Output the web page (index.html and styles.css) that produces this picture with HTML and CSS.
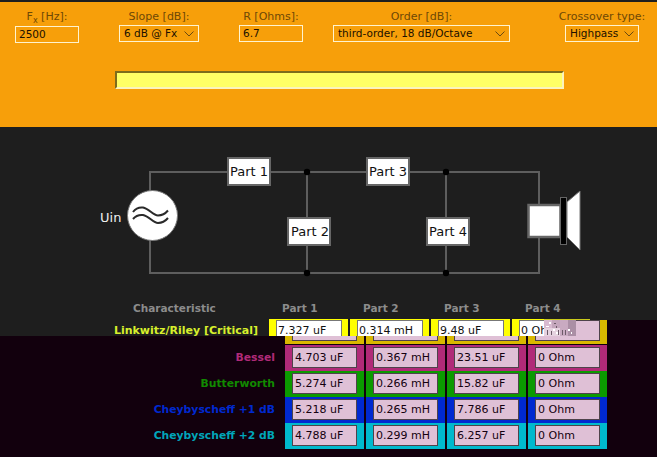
FILE: index.html
```html
<!DOCTYPE html>
<html lang="en">
<head>
<meta charset="UTF-8">
<meta name="viewport" content="width=device-width, initial-scale=1.0">
<title>Crossover calculator</title>
<link rel="stylesheet" href="styles.css">
</head>
<body>

<div class="controls">
    <div class="field-row">
        <div class="field field-fx">
            <label>F<sub>x</sub> [Hz]:</label>
            <div class="box box-low">2500</div>
        </div>
        <div class="field field-slope">
            <label>Slope [dB]:</label>
            <div class="box picker"><span>6 dB @ Fx</span><svg class="chevron" width="10" height="6" viewBox="0 0 10 6"><path d="M0.5 0.5 L5 5 L9.5 0.5"/></svg></div>
        </div>
        <div class="field field-r">
            <label>R [Ohms]:</label>
            <div class="box">6.7</div>
        </div>
        <div class="field field-order">
            <label>Order [dB]:</label>
            <div class="box picker"><span>third-order, 18 dB/Octave</span><svg class="chevron" width="10" height="6" viewBox="0 0 10 6"><path d="M0.5 0.5 L5 5 L9.5 0.5"/></svg></div>
        </div>
        <div class="field field-type">
            <label>Crossover type:</label>
            <div class="box picker"><span>Highpass</span><svg class="chevron" width="10" height="6" viewBox="0 0 10 6"><path d="M0.5 0.5 L5 5 L9.5 0.5"/></svg></div>
        </div>
    </div>
    <div class="message-bar"></div>
</div>

<div class="schematic">
    <svg class="circuit" width="657" height="173" viewBox="0 127 657 173">
        <g class="wire">
            <path d="M150 191 V172 H539 V204"/>
            <path d="M150 240 V273 H539 V238"/>
            <path d="M307 172 V273"/>
            <path d="M446 172 V273"/>
        </g>
        <circle class="node" cx="307" cy="172" r="3.2"/>
        <circle class="node" cx="307" cy="273" r="3.2"/>
        <circle class="node" cx="446" cy="172" r="3.2"/>
        <circle class="node" cx="446" cy="273" r="3.2"/>

        <circle class="source" cx="152.5" cy="215.5" r="25"/>
        <path class="sine" d="M133 212 C136 208 139 207 143 207.5 C149 208.5 153 215.5 158 215.5 C162 215.5 165 214 168 210.5"/>
        <path class="sine" d="M133 219 C136 215.500 139 214.500 143 215 C149 216 153 223 158 223 C162 223 165 221.500 168 218"/>
        <text class="uin" x="100" y="222">Uin</text>

        <rect class="part" x="228" y="158" width="42" height="27"/>
        <text class="part-name" x="230" y="176">Part 1</text>
        <rect class="part" x="288" y="218" width="42" height="27"/>
        <text class="part-name" x="291" y="236">Part 2</text>
        <rect class="part" x="367" y="158" width="42" height="27"/>
        <text class="part-name" x="369" y="176">Part 3</text>
        <rect class="part" x="427" y="218" width="42" height="27"/>
        <text class="part-name" x="429" y="236">Part 4</text>

        <rect class="coil" x="528.500" y="205" width="32" height="32"/>
        <polygon class="cone" points="567,202 580,191 580,250 567,237"/>
        <rect class="magnet" x="560.5" y="197.5" width="6" height="47"/>
    </svg>
    <div class="table-head">
        <div class="head-name">Characteristic</div>
        <div class="head-part">Part 1</div>
        <div class="head-part">Part 2</div>
        <div class="head-part">Part 3</div>
        <div class="head-part">Part 4</div>
    </div>
</div>

<div class="chart">
    <div class="row row-first">
        <div class="row-name"></div>
        <div class="cell"><div class="value"></div></div>
        <div class="cell"><div class="value"></div></div>
        <div class="cell"><div class="value"></div></div>
        <div class="cell"><div class="value"></div></div>
    </div>
    <div class="row row-bessel">
        <div class="row-name">Bessel</div>
        <div class="cell"><div class="value">4.703 uF</div></div>
        <div class="cell"><div class="value">0.367 mH</div></div>
        <div class="cell"><div class="value">23.51 uF</div></div>
        <div class="cell"><div class="value">0 Ohm</div></div>
    </div>
    <div class="row row-butter">
        <div class="row-name">Butterworth</div>
        <div class="cell"><div class="value">5.274 uF</div></div>
        <div class="cell"><div class="value">0.266 mH</div></div>
        <div class="cell"><div class="value">15.82 uF</div></div>
        <div class="cell"><div class="value">0 Ohm</div></div>
    </div>
    <div class="row row-cheby1">
        <div class="row-name">Cheybyscheff +1 dB</div>
        <div class="cell"><div class="value">5.218 uF</div></div>
        <div class="cell"><div class="value">0.265 mH</div></div>
        <div class="cell"><div class="value">7.786 uF</div></div>
        <div class="cell"><div class="value">0 Ohm</div></div>
    </div>
    <div class="row row-cheby2">
        <div class="row-name">Cheybyscheff +2 dB</div>
        <div class="cell"><div class="value">4.788 uF</div></div>
        <div class="cell"><div class="value">0.299 mH</div></div>
        <div class="cell"><div class="value">6.257 uF</div></div>
        <div class="cell"><div class="value">0 Ohm</div></div>
    </div>

    <!-- old frame left on top of the chart -->
    <div class="stale">
        <div class="stale-row">
            <div class="stale-name">Linkwitz/Riley [Critical]</div>
            <div class="stale-cell"><div class="stale-value">7.327 uF</div></div>
            <div class="stale-cell"><div class="stale-value">0.314 mH</div></div>
            <div class="stale-cell"><div class="stale-value">9.48 uF</div></div>
            <div class="stale-cell"><div class="stale-value">0 Ohm</div></div>
        </div>
    </div>
    <div class="stale-edge"></div>
    <svg class="mosaic" width="32" height="16" viewBox="0 0 32 16">
        <rect width="32" height="16" fill="#d8bad0"/>
        <rect x="16" width="8" height="16" fill="#c9aac1"/>
        <rect x="24" width="8" height="16" fill="#ab8fa5"/>
        <rect x="8" width="8" height="8" fill="#c4a6bc"/>
        <rect x="0" y="8" width="16" height="8" fill="#e6d3e0"/>
        <path class="speck" d="M3 10h1v5h-1z M7 11h1v4h-1z M10 3h2v1h-2z M12 6h1v2h-1z M14 10h1v5h-1z M18 10h1v5h-1z M21 10h1v5h-1z"/>
        <path class="speck-light" d="M5 2h2v2h-2z M2 6h3v1h-3z M9 9h2v2h-2z M12 12h2v2h-2z M24 9h2v2h-2z M27 12h1v2h-1z"/>
    </svg>
</div>

</body>
</html>
```

FILE: styles.css
```css
body {
    font-family: "DejaVu Sans", sans-serif;
    margin: 0;
    padding: 0;
    background-color: #12000d;
    overflow: hidden;
}

/* top panel */
.controls {
    height: 125px;
    border-top: 2px solid #1e1e1e;
    background-color: #f79f0a;
}
.field-row {
    display: flex;
    padding: 8px 0 0 15px;
}
.field {
    display: flex;
    flex-direction: column;
    align-items: center;
}
.field label {
    height: 15px;
    line-height: 13px;
    font-size: 11px;
    color: #6e4806;
    white-space: nowrap;
}
.field label sub {
    font-size: 8px;
    line-height: 0;
}
.field-fx { width: 64px; }
.field-slope { width: 80px; margin-left: 40px; }
.field-r { width: 64px; margin-left: 40px; }
.field-order { width: 177px; margin-left: 30px; }
.field-type { width: 84px; margin-left: 50px; }

.box {
    box-sizing: border-box;
    width: 100%;
    height: 17px;
    padding: 0 3px;
    border: 1px solid #fff3cf;
    font-size: 10.5px;
    line-height: 15px;
    color: #201000;
}
.box-low {
    margin-top: 1px;
}
.picker {
    display: flex;
    justify-content: space-between;
    align-items: center;
    padding: 0 4px;
}
.field-type .picker {
    width: 74px;
}
.chevron path {
    fill: none;
    stroke: #6b4a10;
    stroke-width: 1;
}
.message-bar {
    box-sizing: border-box;
    width: 449px;
    height: 18px;
    margin: 28px 0 0 115px;
    border: 2px solid;
    border-color: #7d6c1c #fbf3bd #fbf3bd #7d6c1c;
    background-color: #ffff66;
}

/* circuit */
.schematic {
    height: 193px;
    background-color: #1e1e1e;
}
.circuit {
    display: block;
}
.wire path {
    fill: none;
    stroke: #5e5e5e;
    stroke-width: 2;
}
.node {
    fill: #000;
}
.source {
    fill: #fff;
    stroke: #777;
    stroke-width: 1;
}
.sine {
    fill: none;
    stroke: #2a2a2a;
    stroke-width: 2;
}
.uin {
    font-size: 13px;
    fill: #eee;
}
.part {
    fill: #fff;
    stroke: #666;
    stroke-width: 2;
}
.part-name {
    font-size: 13px;
    fill: #111;
}
.coil {
    fill: #fff;
    stroke: #666;
    stroke-width: 2.500;
}
.cone {
    fill: #fff;
    stroke: #777;
    stroke-width: 1;
}
.magnet {
    fill: #000;
    stroke: #666;
    stroke-width: 1;
}

.table-head {
    display: grid;
    grid-template-columns: 267px repeat(4, 79px);
    column-gap: 2px;
    font-size: 10.5px;
    line-height: 16px;
    font-weight: bold;
    color: #8c8c8c;
}
.head-name {
    padding-left: 133px;
}
.head-part {
    padding-left: 13px;
}

/* results */
.chart {
    position: relative;
    display: flex;
    flex-direction: column;
    gap: 1.5px;
    height: 137px;
    background-color: #12000d;
}
.row {
    display: grid;
    grid-template-columns: 283px repeat(4, 79px);
    column-gap: 2px;
    height: 24.5px;
}
.row-first {
    height: 23.5px;
    --tone: #d9b800;
}
.row-bessel { --tone: #b02a78; }
.row-butter { --tone: #0b9a00; }
.row-cheby1 { --tone: #0029d0; }
.row-cheby2 { --tone: #00b9cd; }
.row-name {
    padding-right: 8px;
    text-align: right;
    font-size: 10.800px;
    font-weight: bold;
    line-height: 26px;
    color: var(--tone);
}
.row-butter .row-name { color: #118a00; }
.row-cheby2 .row-name { color: #00a6ba; }
.cell {
    padding: 2px 7px;
    background-color: var(--tone);
}
.row-first .cell {
    padding-top: 0;
}
.value {
    box-sizing: border-box;
    height: 21px;
    padding-left: 2px;
    border: 1px solid rgba(0, 0, 0, 0.65);
    background-color: #dfc0d6;
    font-size: 11px;
    line-height: 19px;
    color: #14000f;
}

/* leftovers from the previous frame */
.stale {
    position: absolute;
    top: -2px;
    left: 0;
    width: 544px;
    height: 18px;
    overflow: hidden;
    background-color: #1e1e1e;
}
.stale-row {
    display: grid;
    grid-template-columns: 267px repeat(4, 79px);
    column-gap: 2px;
    margin-top: 1px;
}
.stale-name {
    padding-right: 9px;
    text-align: right;
    font-size: 11px;
    font-weight: bold;
    line-height: 24px;
    color: #d8f02c;
}
.stale-cell {
    padding: 1px 6px 2px 7px;
    background-color: #ffff00;
}
.stale-value {
    box-sizing: border-box;
    height: 22px;
    padding-left: 1px;
    border: 1px solid #777;
    background-color: #fff;
    font-size: 11px;
    line-height: 20px;
    color: #111;
}
.stale-edge {
    position: absolute;
    top: -1px;
    left: 544px;
    width: 46px;
    height: 1px;
    background-color: #c9c91a;
}
.mosaic {
    position: absolute;
    top: 0;
    left: 544px;
}
.speck {
    fill: #6d5a68;
}
.speck-light {
    fill: #fff;
}
```
